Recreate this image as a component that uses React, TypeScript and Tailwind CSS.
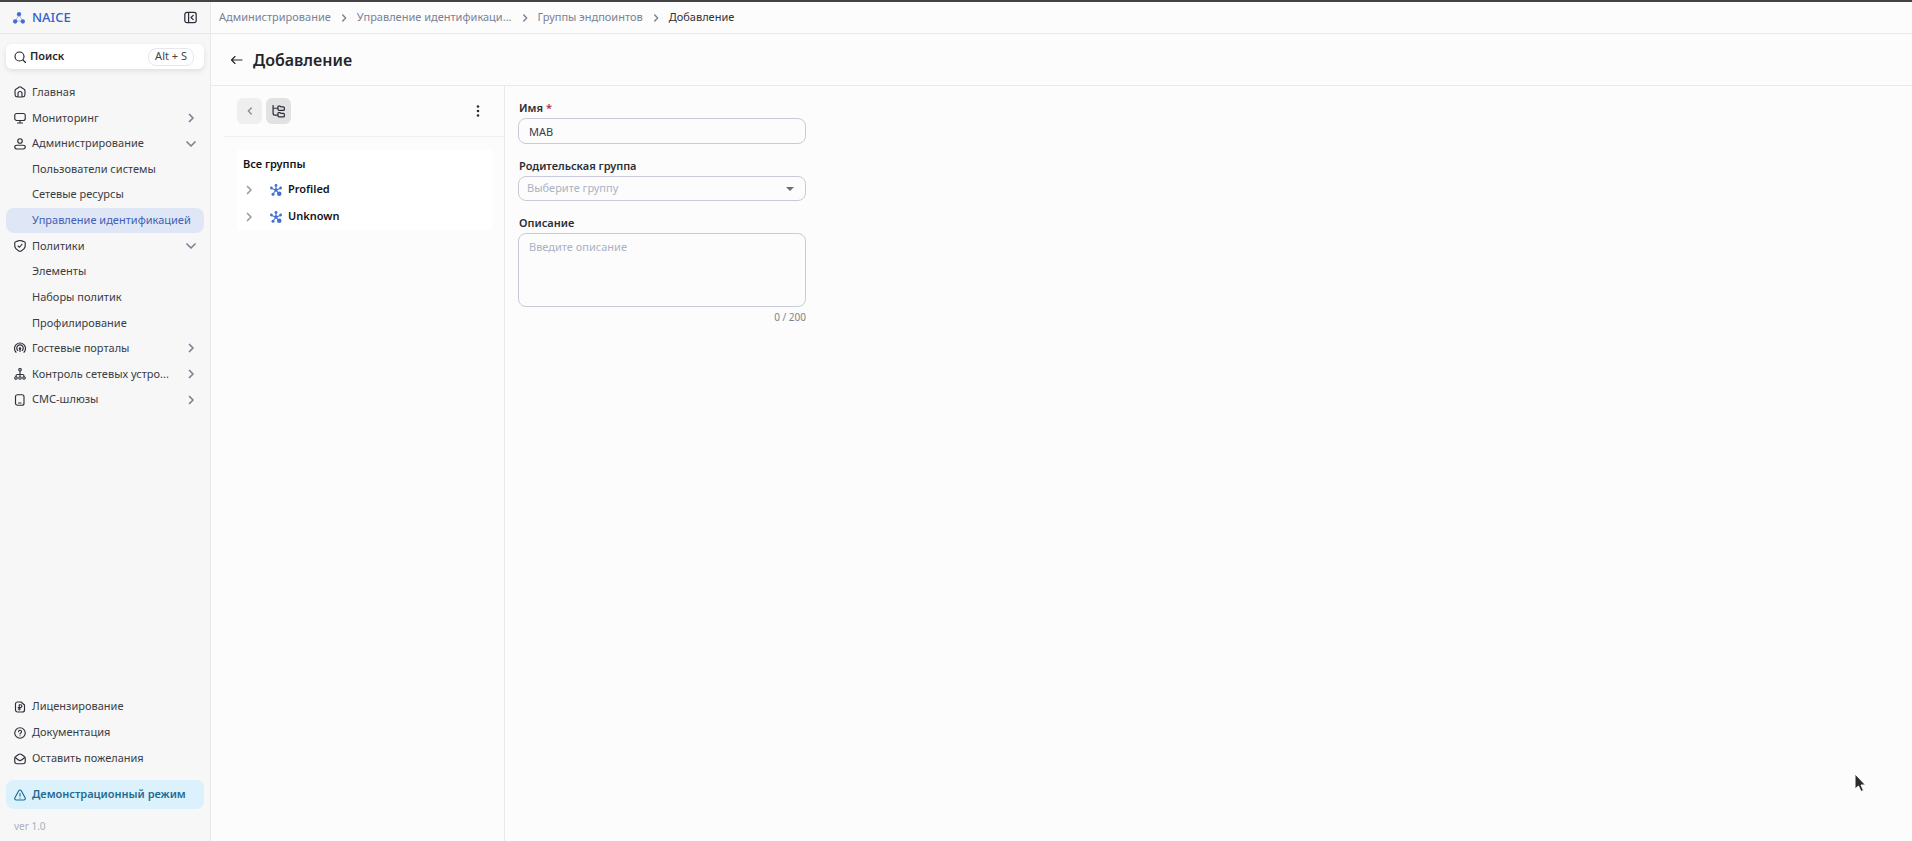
import { useState, type ReactNode } from "react";

type NavItem = {
  label: string;
  icon?: ReactNode;
  chevron?: "right" | "down";
  active?: boolean;
};

function Icon({ children, className = "size-3", stroke = 2.3 }: { children: ReactNode; className?: string; stroke?: number }) {
  return (
    <svg viewBox="0 0 24 24" fill="none" stroke="currentColor" strokeWidth={stroke} strokeLinecap="round"
      strokeLinejoin="round" className={`shrink-0 ${className}`} aria-hidden="true">
      {children}
    </svg>
  );
}

const HomeIcon = () => (
  <Icon>
    <path d="M2 12.2c0-2.3 0-3.4.5-4.4.5-.9 1.5-1.5 3.4-2.7l2-1.3C9.9 2.6 10.9 1.5 12 1.5s2.1 1.1 4.1 2.3l2 1.3c1.9 1.2 2.9 1.8 3.4 2.7.5 1 .5 2.1.5 4.4v1.5c0 3.9 0 5.9-1.2 7.1S17.8 22 14 22h-4c-3.8 0-5.7 0-6.8-1.2S2 17.6 2 13.7z" />
    <path d="M8 21v-6a4 4 0 0 1 8 0v6" />
  </Icon>
);
const MonitorIcon = () => (
  <Icon>
    <rect x="1.5" y="3" width="21" height="14" rx="4" />
    <path d="M12 17v4M7 22h10" />
  </Icon>
);
const UserIcon = () => (
  <Icon>
    <circle cx="12" cy="6" r="4.5" />
    <path d="M6 14.5h12c2.5 0 4.5 1.7 4.5 3.7S20.5 22 18 22H6c-2.5 0-4.5-1.7-4.5-3.8s2-3.7 4.500-3.700z" />
  </Icon>
);
const ShieldIcon = () => (
  <Icon>
    <path d="M1.5 8.5c0-2.7 0-3.7.5-4.3.5-.6 2-.9 4.900-1.900l1.500-.5C10 1.300 11 1 12 1s2 .3 3.600.8l1.500.5c2.900 1 4.400 1.300 4.900 1.900.5.6.5 1.600.5 4.300v2.500c0 5.800-4.800 9-8 10.800-1.200.7-1.500.9-2.500.9s-1.300-.2-2.500-.9c-3.200-1.800-8-5-8-10.800z" />
    <path d="m8 12 3 2.500 5-6" />
  </Icon>
);
const PortalIcon = () => (
  <Icon>
    <path d="M4 20.500A11 11 0 1 1 20 20.500" />
    <path d="M7.500 17A6.500 6.500 0 1 1 16.500 17" />
    <circle cx="12" cy="13" r="1.500" fill="currentColor" />
    <path d="M12 15v4" />
  </Icon>
);
const NetworkIcon = () => (
  <Icon>
    <circle cx="12" cy="3.500" r="2.500" />
    <path d="M12 6.500v10M4 17v-1c0-2 1-3 3-3h10c2 0 3 1 3 3v1" />
    <circle cx="4" cy="20" r="2.500" />
    <circle cx="12" cy="20" r="2.500" />
    <circle cx="20" cy="20" r="2.500" />
  </Icon>
);
const PhoneIcon = () => (
  <Icon>
    <rect x="3" y="1.500" width="17" height="21" rx="4" />
    <path d="M9 18h5" />
  </Icon>
);
const LicenseIcon = () => (
  <Icon>
    <path d="M3 6a4 4 0 0 1 4-4h7l7 6v10a4 4 0 0 1-4 4H7a4 4 0 0 1-4-4z" />
    <path d="M10.500 18V7.500H13a2.600 2.600 0 0 1 0 5.500H8.500M8.500 16H13" />
  </Icon>
);
const HelpIcon = () => (
  <Icon>
    <circle cx="12" cy="12" r="10.500" />
    <path d="M9 9.500a3 3 0 1 1 4.500 2.600c-1 .6-1.500 1-1.500 2M12 17.500v.1" />
  </Icon>
);
const MailIcon = () => (
  <Icon>
    <path d="M1.500 10.500c0-1.500.5-2.500 2-3.500L9 3c2-1.300 4-1.300 6 0l5.500 4c1.500 1 2 2 2 3.500V17c0 3-1.500 4.500-4.500 4.500H6c-3 0-4.500-1.500-4.500-4.500z" />
    <path d="m3 9.500 6 4.500c2 1.500 4 1.500 6 0l6-4.500" />
  </Icon>
);

const Chevron = ({ dir, className }: { dir: "right" | "down" | "left"; className?: string }) => (
  <Icon className={className} stroke={3.5}>
    {dir === "right" && <path d="m9 5 7 7-7 7" />}
    {dir === "left" && <path d="m15 5-7 7 7 7" />}
    {dir === "down" && <path d="m4 8 8 8 8-8" />}
  </Icon>
);

const Logo = () => (
  <svg viewBox="0 0 24 24" className="size-3 shrink-0 text-[#3f6fd1]" fill="currentColor" aria-hidden="true">
    <path d="M12 5 5 18h14z" fill="none" stroke="currentColor" strokeWidth="1.500" opacity=".6" />
    <circle cx="12" cy="4.500" r="4.300" />
    <circle cx="4.300" cy="19" r="4.300" />
    <circle cx="19.700" cy="19" r="4.300" />
  </svg>
);

const HubIcon = () => (
  <svg viewBox="0 0 24 24" className="size-3 shrink-0 text-[#4370d0]" fill="currentColor" aria-hidden="true">
    <path d="M12 12V3M12 12 3 9M12 12l9-3M12 12l-6 8M12 12l6 8" stroke="currentColor" strokeWidth="2.200" />
    <circle cx="12" cy="12" r="3.500" />
    <circle cx="12" cy="2.800" r="2.800" />
    <circle cx="2.800" cy="8" r="2.800" />
    <circle cx="21.200" cy="8" r="2.800" />
    <circle cx="6" cy="20.500" r="3" />
    <circle cx="18.500" cy="19.500" r="4.500" />
  </svg>
);

const NAV: NavItem[] = [
  { label: "Главная", icon: <HomeIcon /> },
  { label: "Мониторинг", icon: <MonitorIcon />, chevron: "right" },
  { label: "Администрирование", icon: <UserIcon />, chevron: "down" },
  { label: "Пользователи системы" },
  { label: "Сетевые ресурсы" },
  { label: "Управление идентификацией", active: true },
  { label: "Политики", icon: <ShieldIcon />, chevron: "down" },
  { label: "Элементы" },
  { label: "Наборы политик" },
  { label: "Профилирование" },
  { label: "Гостевые порталы", icon: <PortalIcon />, chevron: "right" },
  { label: "Контроль сетевых устро...", icon: <NetworkIcon />, chevron: "right" },
  { label: "СМС-шлюзы", icon: <PhoneIcon />, chevron: "right" },
];

const FOOTER_NAV: NavItem[] = [
  { label: "Лицензирование", icon: <LicenseIcon /> },
  { label: "Документация", icon: <HelpIcon /> },
  { label: "Оставить пожелания", icon: <MailIcon /> },
];

const CRUMBS = ["Администрирование", "Управление идентификаци...", "Группы эндпоинтов"];
const GROUPS = ["Profiled", "Unknown"];

const inputCls = "block w-full rounded-lg border border-[#c9cad9] bg-transparent text-[11px] placeholder:text-[#a9b3c4] focus:outline-none focus:border-[#4370d0]";
const labelCls = "block h-5 pl-px text-[11px] leading-5 font-semibold text-[#2b2e36]";

function NavLink({ item }: { item: NavItem }) {
  return (
    <a href="#" className={`flex flex-1 items-center rounded-lg pr-[7px] pl-2 ${item.active ? "bg-[#dfe6f6] text-[#3f5fb5]" : "text-[#3a3d45]"}`}>
      <span className="w-[18px] shrink-0 text-[#2b2f3a]">{item.icon}</span>
      <span className="whitespace-nowrap">{item.label}</span>
      {item.chevron && <Chevron dir={item.chevron} className="ml-auto size-3 text-[#7c8497]" />}
    </a>
  );
}

function Sidebar() {
  return (
    <aside className="flex w-[211px] shrink-0 flex-col border-r border-[#e9e9ed] bg-[#f7f7f7] text-[11px]">
      <div className="flex h-8 items-center border-b border-[#e9e9ed] pr-[13px] pl-[13px]">
        <Logo />
        <span className="ml-[7px] text-[13px] font-medium text-[#2f62cc]">NAICE</span>
        <button aria-label="Свернуть меню" className="ml-auto text-[#2b2f3a]">
          <Icon className="size-[13px]">
            <rect x="1.500" y="2.500" width="21" height="19" rx="4" />
            <path d="M8.500 3v18M17 8l-4 4 4 4" />
          </Icon>
        </button>
      </div>

      <div className="px-1.5 pt-2.5">
        <button className="flex h-[25px] w-full items-center rounded-md bg-white pr-2.5 pl-2 text-[#23262e] shadow-[0_2px_5px_rgba(40,50,80,0.12)]">
          <Icon className="size-3">
            <circle cx="11" cy="11" r="9" />
            <path d="m18 18 5 5" />
          </Icon>
          <span className="ml-1 font-semibold">Поиск</span>
          <kbd className="ml-auto flex h-[18px] items-center rounded-lg border border-[#e6e7ec] px-1.5 font-[inherit] text-[#3f434c]">Alt + S</kbd>
        </button>
      </div>

      <nav className="mx-1.5 mt-[11px] flex h-[332px] flex-col gap-px">
        {NAV.map(item => <NavLink key={item.label} item={item} />)}
      </nav>

      <nav className="mx-1.5 mt-auto flex h-[77px] flex-col gap-px">
        {FOOTER_NAV.map(item => <NavLink key={item.label} item={item} />)}
      </nav>
      <button className="mx-1.5 mt-[9px] flex h-[29px] items-center rounded-lg bg-[#dbf1fc] pl-2 font-semibold text-[#1f6a93]">
        <Icon className="size-3">
          <path d="M9.500 3.500c1.200-2 3.800-2 5 0l7.700 14c1.100 2-.3 4.500-2.600 4.500H4.400c-2.300 0-3.700-2.500-2.600-4.500z" />
          <path d="M12 9v5M12 18v.1" />
        </Icon>
        <span className="ml-1.5 whitespace-nowrap">Демонстрационный режим</span>
      </button>
      <p className="pt-[9px] pb-[7px] pl-3.5 text-[10px] leading-4 text-[#a9afbb]">ver 1.0</p>
    </aside>
  );
}

function GroupTree() {
  return (
    <section className="w-[294px] shrink-0 border-r border-[#e9e9ed] pl-[13px]">
      <div className="flex h-[51px] items-center gap-1 border-b border-[#efeff1] pr-5 pl-[13px]">
        <button aria-label="Назад" className="flex h-[26px] w-[25px] items-center justify-center rounded-md bg-[#efefef] text-[#8d8f94]">
          <Chevron dir="left" className="size-2.5" />
        </button>
        <button aria-label="Дерево групп" className="flex h-[26px] w-[25px] items-center justify-center rounded-md bg-[#e2e2e2] text-[#2b2f3a]">
          <Icon className="size-[13px]">
            <path d="M2 1v14c0 2.500 1 3.500 3.500 3.500H10M2 6h8" />
            <path d="M11 3.500C11 2.500 11.500 2 12.500 2H15l1.500 1.500H21c1.200 0 1.800.6 1.800 1.800v2.900c0 1.200-.6 1.800-1.800 1.800h-8c-1.300 0-2-.7-2-2z" />
            <path d="M11 15.500c0-1 .5-1.500 1.500-1.500H15l1.500 1.500H21c1.200 0 1.800.6 1.800 1.800v2.900c0 1.200-.6 1.800-1.800 1.800h-8c-1.300 0-2-.7-2-2z" />
          </Icon>
        </button>
        <button aria-label="Действия" className="ml-auto text-[#2b2f3a]">
          <svg viewBox="0 0 12 12" className="size-3" fill="currentColor" aria-hidden="true">
            <circle cx="6" cy="1.500" r="1.300" />
            <circle cx="6" cy="6" r="1.300" />
            <circle cx="6" cy="10.500" r="1.300" />
          </svg>
        </button>
      </div>
      <div className="mt-[13px] mr-3 ml-[13px] bg-white pl-1.5 text-[11px] font-semibold text-[#111318]">
        <p className="h-[26px] leading-7">Все группы</p>
        <ul>
          {GROUPS.map(g => (
            <li key={g} className="flex h-[27px] items-center">
              <button aria-label={`Развернуть ${g}`} className="text-[#9a9ea8]">
                <Chevron dir="right" className="size-3" />
              </button>
              <span className="ml-[15px]"><HubIcon /></span>
              <span className="ml-1.5">{g}</span>
            </li>
          ))}
        </ul>
      </div>
    </section>
  );
}

function GroupForm() {
  const [name, setName] = useState("MAB");
  const [description, setDescription] = useState("");

  return (
    <form className="w-[301px] pt-3 pl-[13px]">
      <label htmlFor="name" className={labelCls}>
        Имя <span className="text-[#b5304a]">*</span>
      </label>
      <input id="name" value={name} onChange={e => setName(e.target.value)} className={`${inputCls} h-[26px] px-2.5 text-[#3a3d45]`} />

      <label htmlFor="parent" className={`${labelCls} mt-3`}>Родительская группа</label>
      <div className="relative">
        <select id="parent" defaultValue="" className={`${inputCls} h-[25px] appearance-none px-2 text-[#a9b3c4]`}>
          <option value="">Выберите группу</option>
          {GROUPS.map(g => <option key={g}>{g}</option>)}
        </select>
        <svg viewBox="0 0 8 4" className="pointer-events-none absolute top-[11px] right-3 h-1 w-2" aria-hidden="true">
          <path d="M0 0h8L4 4z" fill="#6b6d73" />
        </svg>
      </div>

      <label htmlFor="description" className={`${labelCls} mt-3`}>Описание</label>
      <textarea id="description" maxLength={200} placeholder="Введите описание" value={description}
        onChange={e => setDescription(e.target.value)}
        className={`${inputCls} h-[74px] resize-none px-2.5 py-1 leading-[18px] text-[#3a3d45]`} />
      <p className="mt-0.5 text-right text-[10px] leading-4 text-[#7d828e]">{description.length} / 200</p>
    </form>
  );
}

export default function App() {
  return (
    <div className="flex min-h-screen border-t-2 border-[#454343] bg-[#fcfcfc] font-['Noto_Sans',sans-serif]">
      <Sidebar />
      <main className="flex min-w-0 flex-1 flex-col">
        <nav className="flex h-8 items-center gap-2 border-b border-[#e9e9ed] pl-2 text-[11px] text-[#7a8194]">
          {CRUMBS.map(c => (
            <span key={c} className="flex items-center gap-2">
              <a href="#" className="whitespace-nowrap">{c}</a>
              <Chevron dir="right" className="size-2.5" />
            </span>
          ))}
          <span className="text-[#2f333c]">Добавление</span>
        </nav>
        <header className="flex h-[52px] items-center gap-2.5 border-b border-[#e9e9ed] pl-5 text-[#23262e]">
          <button aria-label="Вернуться">
            <Icon className="size-3">
              <path d="M22 12H2M8 5l-7 7 7 7" />
            </Icon>
          </button>
          <h1 className="text-[16px] font-semibold">Добавление</h1>
        </header>
        <div className="flex flex-1">
          <GroupTree />
          <GroupForm />
        </div>
      </main>

      {/* mouse pointer */}
      <svg viewBox="0 0 12 20" className="pointer-events-none absolute top-[773px] right-[46px] h-5 w-3" aria-hidden="true">
        <path d="M1 1v15l3.500-3 2.500 5.500 2.500-1L7 12h4.500z" fill="#2b2b2b" stroke="#fff" strokeWidth="1" />
      </svg>
    </div>
  );
}
